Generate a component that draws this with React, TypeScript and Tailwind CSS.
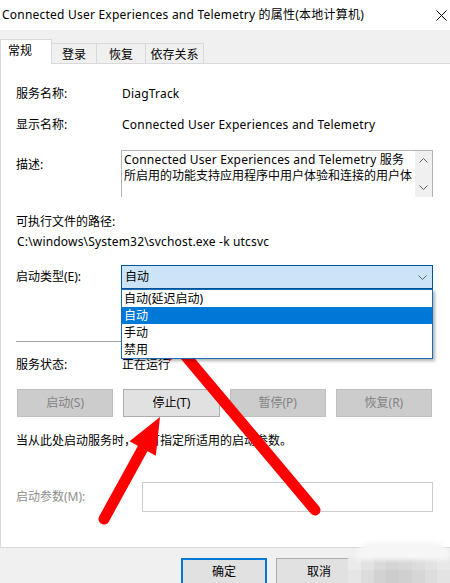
import React from "react";

function Chevron({ up = false }: { up?: boolean }) {
  return (
    <svg width="9" height="5" viewBox="0 0 9 5" className="block">
      <polyline
        points={up ? "0.5,4.5 4.5,0.5 8.5,4.5" : "0.5,0.5 4.5,4.5 8.5,0.5"}
        fill="none"
        stroke="#606060"
        strokeWidth="1"
      />
    </svg>
  );
}

function Arrow({ tip, tail, len, half }: { tip: [number, number]; tail: [number, number]; len: number; half: number }) {
  const dx = tip[0] - tail[0];
  const dy = tip[1] - tail[1];
  const d = Math.hypot(dx, dy);
  const ux = dx / d;
  const uy = dy / d;
  const bx = tip[0] - ux * len;
  const by = tip[1] - uy * len;
  const nx = -uy;
  const ny = ux;
  const p1 = `${bx + nx * half},${by + ny * half}`;
  const p2 = `${bx - nx * half},${by - ny * half}`;
  const sx = tip[0] - ux * (len - 4);
  const sy = tip[1] - uy * (len - 4);
  return (
    <g>
      <line x1={tail[0]} y1={tail[1]} x2={sx} y2={sy} stroke="#ff0000" strokeWidth="11" strokeLinecap="round" />
      <polygon points={`${tip[0]},${tip[1]} ${p1} ${p2}`} fill="#ff0000" />
    </g>
  );
}

export default function App() {
  const wm1 = ["#ebebeb", "#e2e2e2", "#d9d9d9", "#d4d4d4", "#d7d7d7", "#dcdcdc", "#e2e2e2", "#e8e8e8"];
  const wm2 = ["#e6e6e6", "#dcdcdc", "#d2d2d2", "#cdcdcd", "#d0d0d0", "#d6d6d6", "#dddddd", "#e3e3e3"];
  return (
    <div className="relative w-[450px] h-[583px] overflow-hidden bg-[#f0f0f0] text-[12px] leading-[16px] text-black font-['Noto_Sans','Noto_Sans_CJK_SC',sans-serif]">
      {/* Title bar */}
      <div className="h-[30px] bg-white flex items-center justify-between pl-[2px] pr-[3px]">
        <span className="text-[12px] whitespace-nowrap tracking-[0.22px]">Connected User Experiences and Telemetry 的属性(本地计算机)</span>
        <svg width="11" height="11" viewBox="0 0 11 11" className="block">
          <line x1="0.5" y1="0.5" x2="10.5" y2="10.5" stroke="#000" strokeWidth="1" />
          <line x1="10.5" y1="0.5" x2="0.5" y2="10.5" stroke="#000" strokeWidth="1" />
        </svg>
      </div>

      {/* Tabs */}
      <div className="h-[33px] flex items-end">
        <div className="relative z-10 -mb-px h-[25px] w-[52px] bg-white border-l border-t border-r border-[#d9d9d9] pl-[7px] pt-[3px]">
          常规
        </div>
        <div className="h-[20px] w-[45px] border-t border-r border-[#d9d9d9] flex items-center justify-center pt-[2px]">登录</div>
        <div className="h-[20px] w-[49px] border-t border-r border-[#d9d9d9] flex items-center justify-center pt-[2px]">恢复</div>
        <div className="h-[20px] w-[58px] border-t border-r border-[#d9d9d9] flex items-center justify-center pt-[2px]">依存关系</div>
      </div>

      {/* Panel */}
      <div className="h-[485px] bg-white border-l border-t border-b border-[#d9d9d9] pl-[15px] pr-[17px]">
        <div className="mt-[22px] h-[16px] flex">
          <div className="w-[106px]">服务名称:</div>
          <div className="tracking-[0.2px]">DiagTrack</div>
        </div>
        <div className="mt-[15px] h-[16px] flex">
          <div className="w-[106px]">显示名称:</div>
          <div className="whitespace-nowrap tracking-[0.22px]">Connected User Experiences and Telemetry</div>
        </div>
        <div className="mt-[17px] flex">
          <div className="w-[105px] pt-[7px]">描述:</div>
          <div className="flex-1 h-[47px] border border-[#b4b4b4] border-b-0 flex">
            <div className="flex-1 pl-[2px] pt-[1px] overflow-hidden whitespace-nowrap">
              <div className="tracking-[0.2px]">Connected User Experiences and Telemetry 服务</div>
              <div>所启用的功能支持应用程序中用户体验和连接的用户体</div>
            </div>
            <div className="w-[17px] bg-[#f0f0f0] flex flex-col items-center justify-between pt-[7px] pb-[7px]">
              <Chevron up />
              <Chevron />
            </div>
          </div>
        </div>
        <div className="mt-[17px] h-[16px]">可执行文件的路径:</div>
        <div className="mt-[4px] h-[16px] ml-px whitespace-nowrap tracking-[0.18px]">C:\windows\System32\svchost.exe -k utcsvc</div>

        <div className="mt-[15px] flex items-center">
          <div className="w-[105px]">启动类型(E):</div>
          <div className="relative flex-1 h-[24px] bg-[#cce4f7] border border-[#005499] flex items-center justify-between pl-[3px] pr-[5px]">
            <span>自动</span>
            <Chevron />
            <div className="absolute z-20 top-[23px] left-[-1px] right-[-1px] bg-white border border-[#1c6bb5] shadow-[2px_2px_3px_rgba(0,0,0,0.3)]">
              <div className="h-[17px] leading-[17px] pl-[2px]">自动(延迟启动)</div>
              <div className="h-[17px] leading-[17px] pl-[2px] bg-[#0078d7] text-white">自动</div>
              <div className="h-[17px] leading-[17px] pl-[2px]">手动</div>
              <div className="h-[17px] leading-[17px] pl-[2px]">禁用</div>
            </div>
          </div>
        </div>

        <div className="mt-[52px] h-px bg-[#a0a0a0]" />

        <div className="mt-[15px] h-[16px] flex">
          <div className="w-[106px]">服务状态:</div>
          <div>正在运行</div>
        </div>

        <div className="mt-[16px] mx-px grid grid-cols-4 gap-[10px]">
          <div className="h-[28px] bg-[#cccccc] border border-[#bfbfbf] text-[#838383] flex items-center justify-center">启动(S)</div>
          <div className="h-[28px] bg-[#e1e1e1] border border-[#adadad] flex items-center justify-center">停止(T)</div>
          <div className="h-[28px] bg-[#cccccc] border border-[#bfbfbf] text-[#838383] flex items-center justify-center">暂停(P)</div>
          <div className="h-[28px] bg-[#cccccc] border border-[#bfbfbf] text-[#838383] flex items-center justify-center">恢复(R)</div>
        </div>

        <div className="mt-[16px] h-[16px] whitespace-nowrap">当从此处启动服务时，你可指定所适用的启动参数。</div>

        <div className="mt-[33px] flex items-center">
          <div className="w-[126px] text-[#8d8d8d]">启动参数(M):</div>
          <div className="flex-1 h-[30px] border border-[#cccccc] bg-white" />
        </div>
      </div>

      {/* Bottom buttons */}
      <div className="flex gap-[9px] pl-[181px] pt-[10px]">
        <div className="w-[86px] h-[28px] shrink-0 bg-[#e1e1e1] border-2 border-[#0078d7] flex items-center justify-center">确定</div>
        <div className="w-[86px] h-[28px] shrink-0 bg-[#e1e1e1] border border-[#adadad] flex items-center justify-center">取消</div>
      </div>

      {/* Watermark mosaic */}
      <div className="absolute left-[348px] top-[556px] grid grid-cols-8 blur-[0.6px] pointer-events-none">
        {wm1.map((c, i) => (
          <div key={"a" + i} className="w-[14px] h-[14px]" style={{ backgroundColor: c }} />
        ))}
        {wm2.map((c, i) => (
          <div key={"b" + i} className="w-[14px] h-[14px]" style={{ backgroundColor: c }} />
        ))}
      </div>
      <div className="absolute left-[355px] top-[542px] w-[95px] h-[18px] rounded-t-[40px] bg-[#f6f6f6] blur-[2px] pointer-events-none" />

      {/* Red arrows */}
      <svg className="absolute inset-0 pointer-events-none" width="450" height="583" viewBox="0 0 450 583">
        <Arrow tip={[157, 322]} tail={[315, 510]} len={38} half={16} />
        <Arrow tip={[160, 417]} tail={[104, 519]} len={36} half={15} />
      </svg>
    </div>
  );
}
